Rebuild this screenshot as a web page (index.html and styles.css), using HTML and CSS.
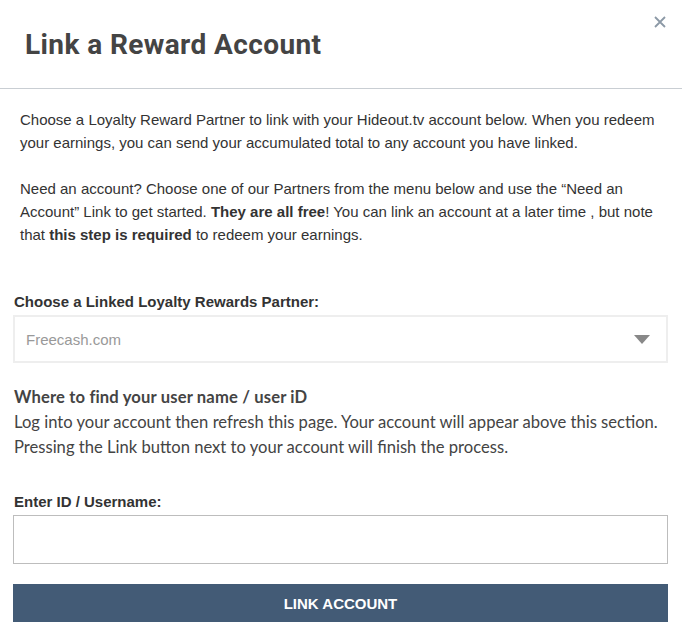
FILE: index.html
```html
<!DOCTYPE html>
<html>
<head>
<meta charset="utf-8">
<link rel="stylesheet" href="styles.css">
</head>
<body>
<div class="modal">
  <div class="modal-header">
    <h1 class="title">Link a Reward Account</h1>
    <button class="close" aria-label="Close">
      <svg width="12" height="12" viewBox="0 0 12 12"><path d="M1 1 L11 11 M11 1 L1 11" stroke="#8c99a6" stroke-width="1.8" fill="none"/></svg>
    </button>
  </div>
  <div class="intro">
    <p>Choose a Loyalty Reward Partner to link with your Hideout.tv account below. When you redeem your earnings, you can send your accumulated total to any account you have linked.</p>
    <p>Need an account? Choose one of our Partners from the menu below and use the “Need an Account” Link to get started. <b>They are all free</b>! You can link an account at a later time , but note that <b>this step is required</b> to redeem your earnings.</p>
  </div>
  <div class="form">
    <label class="label">Choose a Linked Loyalty Rewards Partner:</label>
    <div class="select">
      <span class="select-value">Freecash.com</span>
      <span class="caret"></span>
    </div>
    <div class="help">
      <div class="help-title">Where to find your user name / user iD</div>
      <div class="help-text">Log into your account then refresh this page. Your account will appear above this section. Pressing the Link button next to your account will finish the process.</div>
    </div>
    <label class="label label-id">Enter ID / Username:</label>
    <div class="input"></div>
    <button class="btn">LINK ACCOUNT</button>
  </div>
</div>
</body>
</html>
```

FILE: styles.css
```css
html, body {
  margin: 0;
  padding: 0;
  background: #fff;
}
.modal {
  width: 682px;
  font-family: "Liberation Sans", Arial, sans-serif;
  color: #333;
}
.modal-header {
  position: relative;
  height: 89px;
  border-bottom: 1px solid #c9ced3;
  display: flex;
  align-items: center;
  padding-left: 25px;
  box-sizing: border-box;
}
.title {
  margin: 0;
  font-family: Roboto, sans-serif;
  font-weight: 700;
  font-size: 28px;
  color: #444;
  letter-spacing: 0.4px;
}
.close {
  position: absolute;
  top: 16px;
  right: 16px;
  width: 12px;
  height: 12px;
  padding: 0;
  border: 0;
  background: none;
  display: flex;
}
.intro {
  padding: 19px 20px 0 20px;
}
.intro p {
  margin: 0 0 23px 0;
  font-size: 15px;
  line-height: 23px;
  color: #333;
}
.form {
  padding: 23px 14px 0 13px;
  display: flex;
  flex-direction: column;
}
.label {
  font-size: 15px;
  font-weight: 700;
  line-height: 20px;
  color: #333;
  padding-left: 1px;
}
.select {
  margin-top: 3px;
  height: 48px;
  box-sizing: border-box;
  border: 2px solid #eeeeee;
  display: flex;
  align-items: center;
  justify-content: space-between;
  padding: 0 16px 0 11px;
}
.select-value {
  font-size: 15px;
  color: #999;
}
.caret {
  width: 0;
  height: 0;
  border-left: 8px solid transparent;
  border-right: 8px solid transparent;
  border-top: 9px solid #888;
}
.help {
  margin-top: 22px;
  font-family: Lato, sans-serif;
  font-size: 16.6px;
  line-height: 25px;
  color: #444;
  padding-left: 1px;
}
.help-title {
  font-weight: 700;
  letter-spacing: 0.15px;
}
.label-id {
  margin-top: 32px;
}
.input {
  margin-top: 3px;
  height: 49px;
  box-sizing: border-box;
  border: 1px solid #bdbdbd;
}
.btn {
  margin-top: 20px;
  height: 38px;
  border: 0;
  background: #435b76;
  color: #fff;
  font-family: "Liberation Sans", Arial, sans-serif;
  font-weight: 700;
  font-size: 15px;
}
```
